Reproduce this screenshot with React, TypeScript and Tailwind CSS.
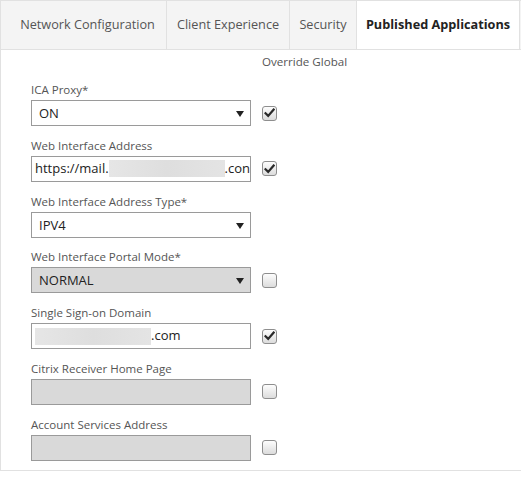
import React from 'react';

const TABS = [
  { label: 'Network Configuration', w: 'w-[167px]' },
  { label: 'Client Experience', w: 'w-[123px]' },
  { label: 'Security', w: 'w-[67px]' },
  { label: 'Published Applications', w: 'w-[163px]', active: true },
];

const Blur = ({ w }: { w: string }) => (
  <span className={`inline-block h-[17px] ${w} bg-gradient-to-r from-[#e6e6e6] via-[#dedede] to-[#e4e4e4] align-middle`} />
);

const Check = ({ checked }: { checked?: boolean }) => (
  <span className="ml-[11px] flex h-[15px] w-[15px] items-center justify-center rounded-[3px] border border-[#8e8e8e] bg-gradient-to-b from-[#fdfdfd] to-[#dcdcdc]">
    {checked && (
      <svg width="11" height="10" viewBox="0 0 11 10">
        <path d="M1.5 5.2 L4.2 7.9 L9.6 1.6" fill="none" stroke="#2a2a2a" strokeWidth="2.2" strokeLinecap="square" />
      </svg>
    )}
  </span>
);

const Arrow = () => (
  <svg className="absolute right-[6px] top-[10px]" width="8" height="6" viewBox="0 0 8 6">
    <polygon points="0,0 8,0 4,6" fill="#222" />
  </svg>
);

const Row = ({ label, children, checked, noCheck }: { label: string; children: React.ReactNode; checked?: boolean; noCheck?: boolean }) => (
  <div className="mb-[9.8px]">
    <div className="h-[20px] text-[11.5px] leading-[20px] text-[#555]">{label}</div>
    <div className="flex items-center">
      {children}
      {!noCheck && <Check checked={checked} />}
    </div>
  </div>
);

export default function App() {
  return (
    <div className="h-[477px] w-[521px] bg-white text-[#333]" style={{ fontFamily: '"Open Sans", "Liberation Sans", sans-serif' }}>
      {/* tab strip */}
      <div className="flex h-[50px] border-y border-[#e1e1e1] bg-[#f4f4f4]">
        {TABS.map(t => (
          <div
            key={t.label}
            className={`${t.w} flex shrink-0 items-center justify-center border-r border-[#e1e1e1] text-[12.7px] ${
              t.active ? 'bg-white font-bold text-[#222]' : 'text-[#555]'
            } ${t.label === 'Network Configuration' ? 'border-l pl-[8px]' : ''}`}
          >
            {t.label}
          </div>
        ))}
      </div>

      <div className="h-[421px] border-b border-l border-[#e1e1e1]">
        <div className="pl-[261px] pt-[4px] text-[11.6px] leading-[16px] text-[#555]">Override Global</div>

        <div className="pl-[30px] pt-[10px]">
          <Row label="ICA Proxy*" checked>
            <div className="relative h-[26px] w-[220px] border border-[#9a9a9a] bg-white pl-[7px] text-[13px] leading-[24px] text-[#222]">
              ON
              <Arrow />
            </div>
          </Row>

          <Row label="Web Interface Address" checked>
            <div className="flex h-[26px] w-[220px] items-center overflow-hidden whitespace-nowrap border border-[#9a9a9a] bg-white pl-[3px] text-[13px] text-[#222]">
              https://mail.
              <Blur w="w-[116px] shrink-0" />
              .con
            </div>
          </Row>

          <Row label="Web Interface Address Type*" noCheck>
            <div className="relative h-[26px] w-[220px] border border-[#9a9a9a] bg-white pl-[7px] text-[13px] leading-[24px] text-[#222]">
              IPV4
              <Arrow />
            </div>
          </Row>

          <Row label="Web Interface Portal Mode*">
            <div className="relative h-[26px] w-[220px] border border-[#9a9a9a] bg-[#d9d9d9] pl-[7px] text-[13px] leading-[24px] text-[#222]">
              NORMAL
              <Arrow />
            </div>
          </Row>

          <Row label="Single Sign-on Domain" checked>
            <div className="flex h-[26px] w-[220px] items-center whitespace-nowrap border border-[#9a9a9a] bg-white pl-[3px] text-[13px] text-[#222]">
              <Blur w="w-[116px] shrink-0" />
              .com
            </div>
          </Row>

          <Row label="Citrix Receiver Home Page">
            <div className="h-[26px] w-[220px] border border-[#9a9a9a] bg-[#d9d9d9]" />
          </Row>

          <Row label="Account Services Address">
            <div className="h-[26px] w-[220px] border border-[#9a9a9a] bg-[#d9d9d9]" />
          </Row>
        </div>
      </div>
    </div>
  );
}
